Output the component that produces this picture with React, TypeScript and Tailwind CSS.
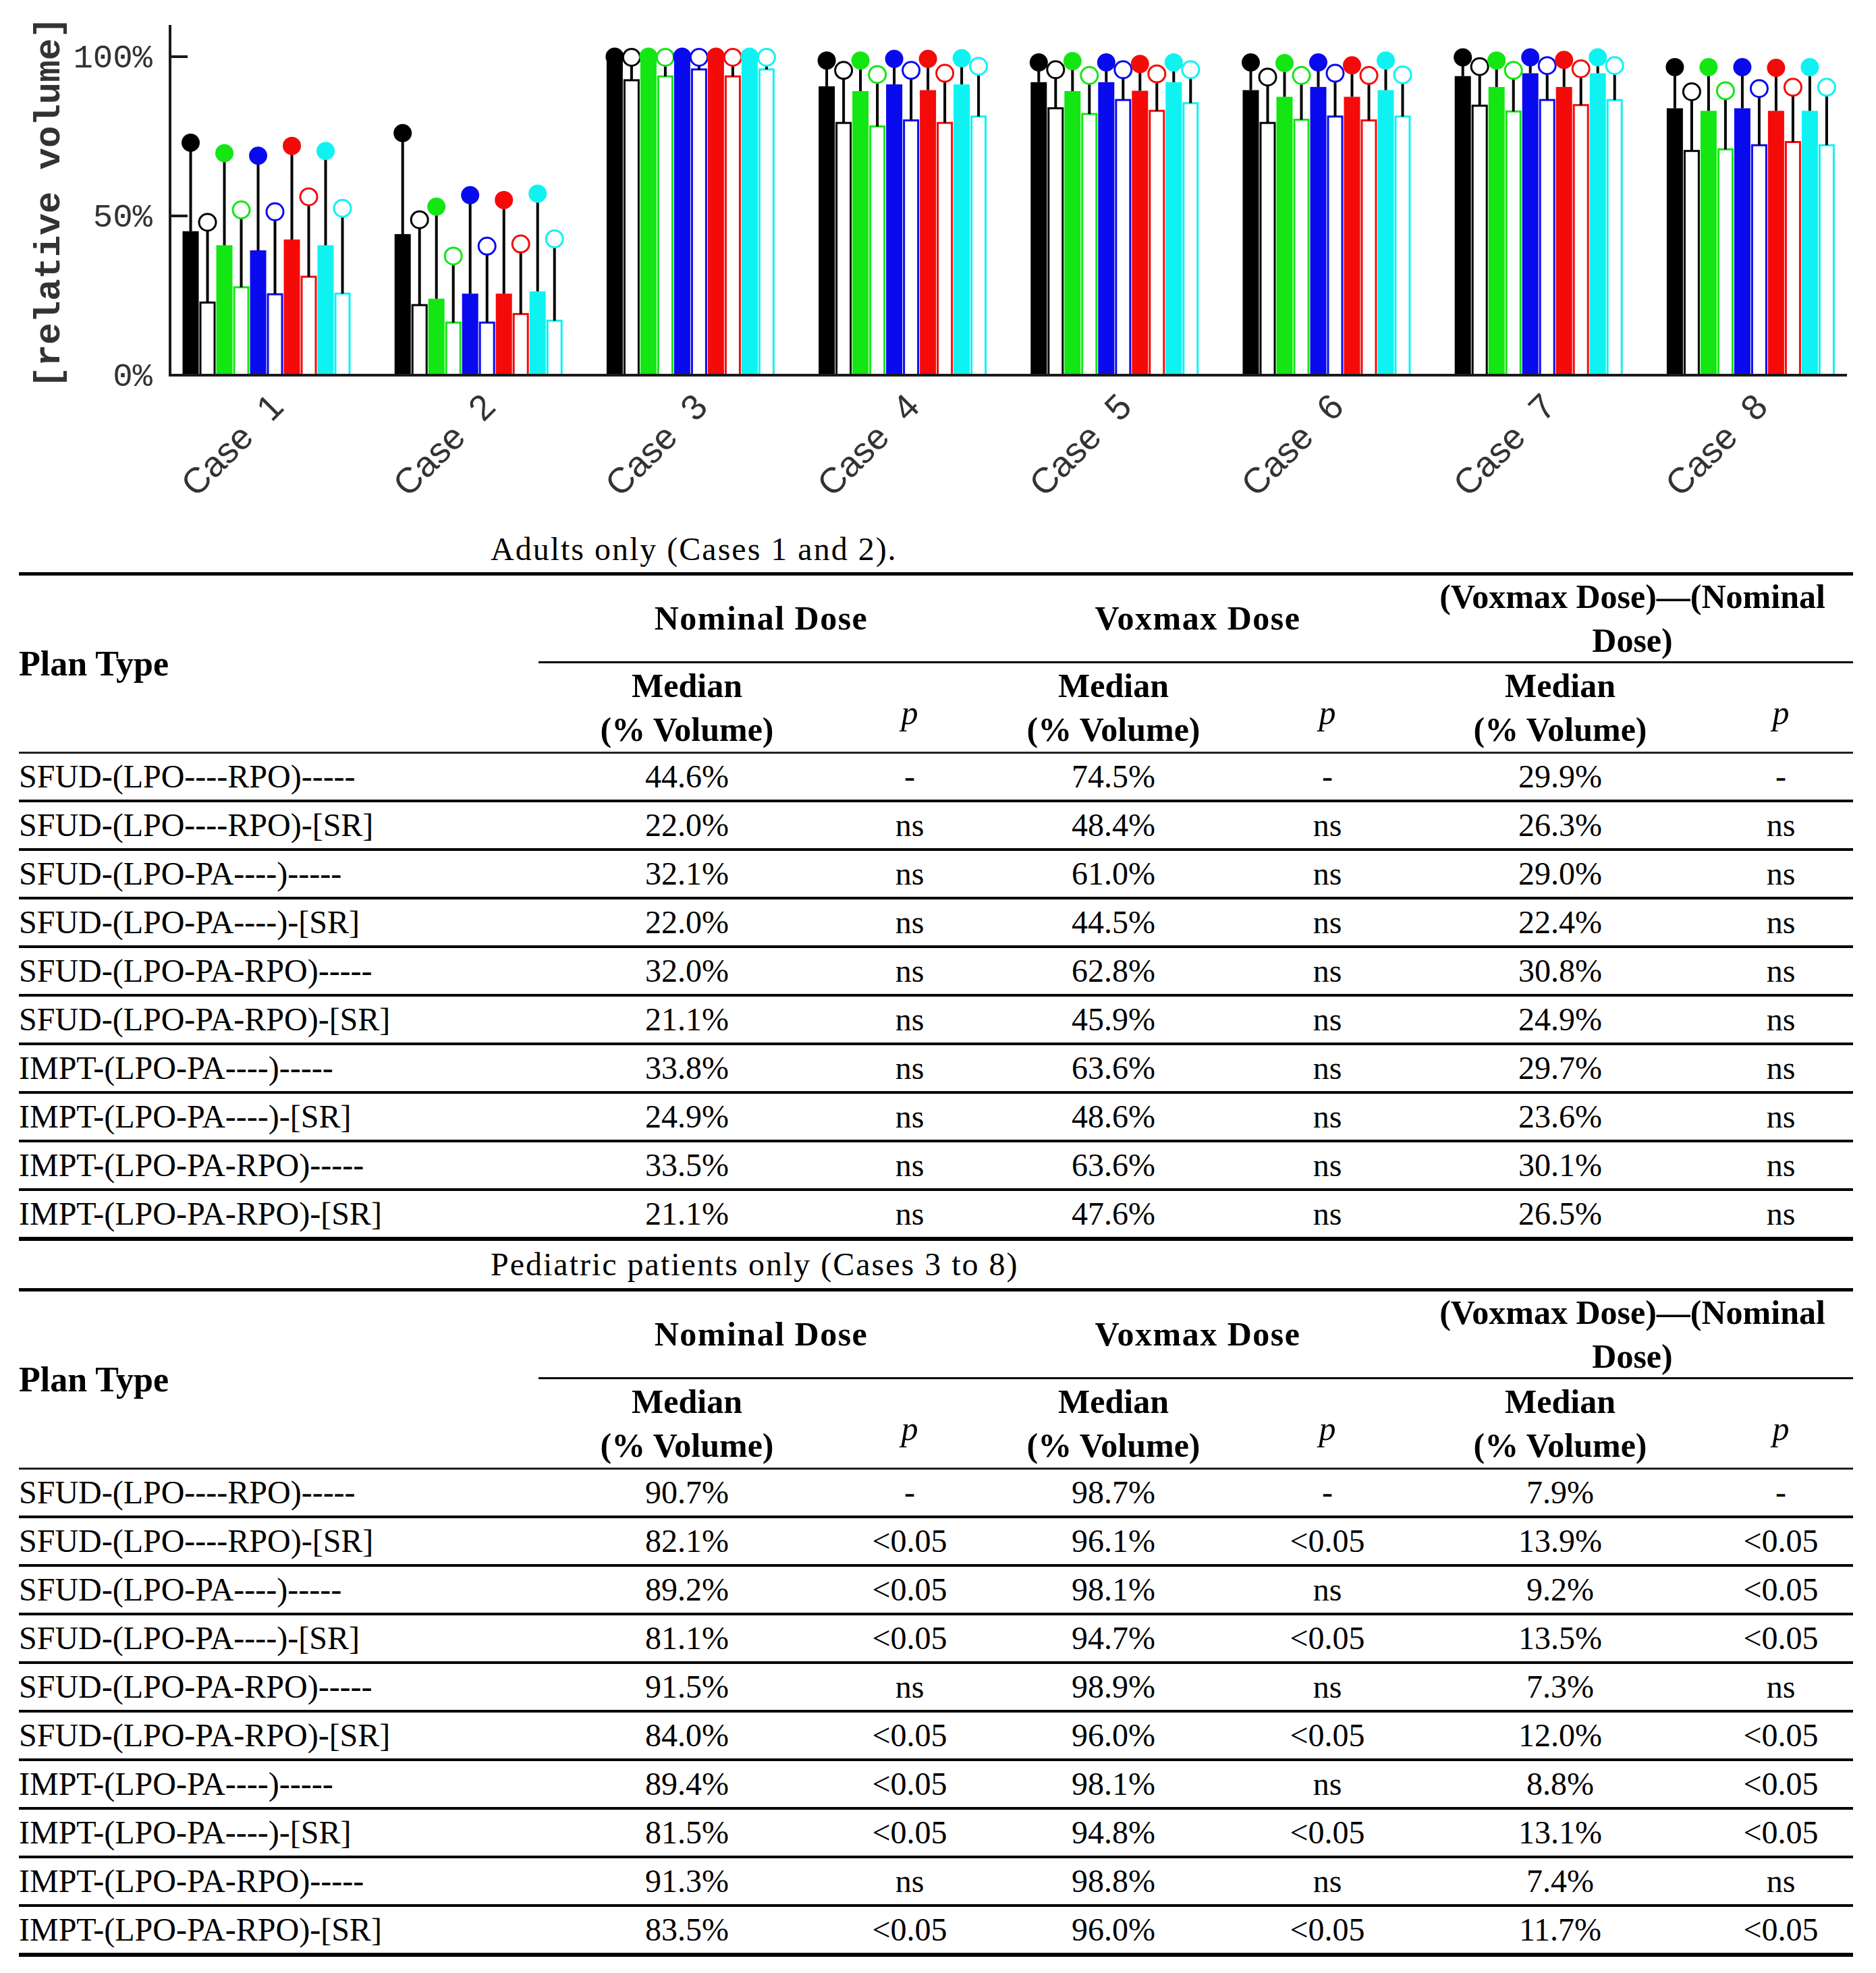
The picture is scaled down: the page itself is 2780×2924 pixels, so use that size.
import React from "react";

const PLANS = [
	"SFUD-(LPO----RPO)-----",
	"SFUD-(LPO----RPO)-[SR]",
	"SFUD-(LPO-PA----)-----",
	"SFUD-(LPO-PA----)-[SR]",
	"SFUD-(LPO-PA-RPO)-----",
	"SFUD-(LPO-PA-RPO)-[SR]",
	"IMPT-(LPO-PA----)-----",
	"IMPT-(LPO-PA----)-[SR]",
	"IMPT-(LPO-PA-RPO)-----",
	"IMPT-(LPO-PA-RPO)-[SR]",
];

// nominal median, p, voxmax median, p, diff median, p
const ADULT_ROWS: string[][] = [
	["44.6%", "-", "74.5%", "-", "29.9%", "-"],
	["22.0%", "ns", "48.4%", "ns", "26.3%", "ns"],
	["32.1%", "ns", "61.0%", "ns", "29.0%", "ns"],
	["22.0%", "ns", "44.5%", "ns", "22.4%", "ns"],
	["32.0%", "ns", "62.8%", "ns", "30.8%", "ns"],
	["21.1%", "ns", "45.9%", "ns", "24.9%", "ns"],
	["33.8%", "ns", "63.6%", "ns", "29.7%", "ns"],
	["24.9%", "ns", "48.6%", "ns", "23.6%", "ns"],
	["33.5%", "ns", "63.6%", "ns", "30.1%", "ns"],
	["21.1%", "ns", "47.6%", "ns", "26.5%", "ns"],
];

const PEDIATRIC_ROWS: string[][] = [
	["90.7%", "-", "98.7%", "-", "7.9%", "-"],
	["82.1%", "<0.05", "96.1%", "<0.05", "13.9%", "<0.05"],
	["89.2%", "<0.05", "98.1%", "ns", "9.2%", "<0.05"],
	["81.1%", "<0.05", "94.7%", "<0.05", "13.5%", "<0.05"],
	["91.5%", "ns", "98.9%", "ns", "7.3%", "ns"],
	["84.0%", "<0.05", "96.0%", "<0.05", "12.0%", "<0.05"],
	["89.4%", "<0.05", "98.1%", "ns", "8.8%", "<0.05"],
	["81.5%", "<0.05", "94.8%", "<0.05", "13.1%", "<0.05"],
	["91.3%", "ns", "98.8%", "ns", "7.4%", "ns"],
	["83.5%", "<0.05", "96.0%", "<0.05", "11.7%", "<0.05"],
];

const BAR_COLORS = ["#000000", "#14e614", "#0a0aee", "#f50a0a", "#0ff2f2"];

// per case: [nominal bar, voxmax marker] for each of the 10 plans
const CASES: number[][][] = [
	[[45.2, 73], [22.8, 48], [40.8, 69.7], [27.6, 51.9], [39.2, 68.9], [25.4, 51.3], [42.6, 72], [30.9, 56], [40.8, 70.4], [25.6, 52.4]],
	[[44.3, 76], [22, 48.8], [24, 52.9], [16.5, 37.4], [25.6, 56.5], [16.5, 40.5], [25.6, 55], [19.2, 41.2], [26.3, 57], [17.1, 42.8]],
	[[99.6, 100], [92.6, 99.8], [99.8, 100], [93.8, 99.8], [99.6, 100], [96, 99.8], [99.8, 100], [93.8, 99.8], [99.8, 100], [96, 99.8]],
	[[90.7, 98.8], [79.2, 95.7], [89.2, 98.8], [78.1, 94.4], [91.3, 99.3], [80, 95.7], [89.5, 99.3], [79.2, 94.8], [91.3, 99.5], [81.2, 97]],
	[[92, 98.2], [83.8, 95.9], [89.2, 98.6], [82, 94.1], [92, 98.2], [86.4, 95.9], [89.3, 97.7], [83, 94.6], [92, 98.2], [85.4, 95.9]],
	[[89.5, 98.2], [79.2, 93.6], [87.4, 98], [80.2, 94.1], [90.5, 98.2], [81.2, 94.8], [87.4, 97.3], [80, 94.1], [89.5, 98.8], [81.2, 94.3]],
	[[93.9, 99.8], [84.6, 96.9], [90.5, 98.8], [82.8, 95.7], [94.8, 99.8], [86.4, 97.2], [90.5, 99], [84.8, 96.2], [94.8, 99.8], [86.4, 97.2]],
	[[83.8, 96.7], [70.4, 89], [83, 96.7], [70.9, 89.3], [83.8, 96.7], [72.2, 90], [83, 96.5], [73.2, 90.4], [83, 96.7], [72.2, 90.4]],
];

const AXIS_X = 252;
const Y0 = 556;
const PX_PER_PCT = 4.72;
const GROUP_X = 270;
const GROUP_STEP = 314.2;
const BAR_W = 25;

const yOf = (v: number) => Y0 - v * PX_PER_PCT;

const Chart = () => {
	return (
		<svg width={2780} height={780} viewBox="0 0 2780 780" className="block">
			{/* bars */}
			{CASES.map((bars, g) =>
				bars.map(([bar], i) => {
					const x = GROUP_X + g * GROUP_STEP + i * BAR_W;
					const color = BAR_COLORS[Math.floor(i / 2)];
					const top = yOf(bar);
					return i % 2 === 0 ? (
						<rect key={`b${g}-${i}`} x={x + 0.5} y={top} width={BAR_W - 1} height={Y0 - top} fill={color} />
					) : (
						<rect
							key={`b${g}-${i}`}
							x={x + 2}
							y={top}
							width={BAR_W - 4}
							height={Y0 - top}
							fill="#fff"
							stroke={color}
							strokeWidth={3}
						/>
					);
				}),
			)}
			{/* whiskers */}
			{CASES.map((bars, g) =>
				bars.map(([bar, mark], i) => {
					const cx = GROUP_X + g * GROUP_STEP + i * BAR_W + BAR_W / 2;
					return (
						<line key={`w${g}-${i}`} x1={cx} x2={cx} y1={yOf(bar)} y2={yOf(mark)} stroke="#000" strokeWidth={4} />
					);
				}),
			)}
			{/* markers */}
			{CASES.map((bars, g) =>
				bars.map(([, mark], i) => {
					const cx = GROUP_X + g * GROUP_STEP + i * BAR_W + BAR_W / 2;
					const color = BAR_COLORS[Math.floor(i / 2)];
					return i % 2 === 0 ? (
						<circle key={`m${g}-${i}`} cx={cx} cy={yOf(mark)} r={13.5} fill={color} />
					) : (
						<circle key={`m${g}-${i}`} cx={cx} cy={yOf(mark)} r={12.5} fill="#fff" stroke={color} strokeWidth={3} />
					);
				}),
			)}
			{/* axes */}
			<line x1={AXIS_X} x2={AXIS_X} y1={37} y2={Y0 + 2} stroke="#1a1a1a" strokeWidth={4} />
			<line x1={AXIS_X} x2={2737} y1={Y0} y2={Y0} stroke="#1a1a1a" strokeWidth={4} />
			<line x1={AXIS_X} x2={AXIS_X + 26} y1={yOf(100)} y2={yOf(100)} stroke="#1a1a1a" strokeWidth={4} />
			<line x1={AXIS_X} x2={AXIS_X + 26} y1={yOf(50)} y2={yOf(50)} stroke="#1a1a1a" strokeWidth={4} />
			{/* tick labels */}
			{[100, 50, 0].map((v) => (
				<text
					key={v}
					x={226}
					y={yOf(v) + 16}
					textAnchor="end"
					fontFamily="'Liberation Mono', monospace"
					fontSize={49}
					fill="#333"
				>
					{v}%
				</text>
			))}
			<text
				transform="translate(88 300) rotate(-90)"
				textAnchor="middle"
				fontFamily="'Liberation Mono', monospace"
				fontWeight="bold"
				fontSize={54}
				fill="#333"
			>
				[relative volume]
			</text>
			{/* case labels */}
			{CASES.map((_, g) => {
				const cx = GROUP_X + g * GROUP_STEP + 125;
				return (
					<text
						key={`c${g}`}
						transform={`translate(${cx + 28} 606) rotate(-45)`}
						textAnchor="end"
						fontFamily="'Liberation Sans', Arial, sans-serif"
						fontSize={53}
						fill="#333"
					>
						Case<tspan dx={34}>{g + 1}</tspan>
					</text>
				);
			})}
		</svg>
	);
};

const COLS = "grid grid-cols-[770px_440px_220px_384px_250px_440px_214px]";

const ResultTable = ({rows}: {rows: string[][]}) => {
	return (
		<div className="ml-[28px] w-[2718px] border-t-[5px] border-black">
			<div className={`${COLS} grid-rows-[130px_134px] font-bold text-[50px] leading-[65px]`}>
				<div className="row-span-2 flex items-center border-b-[3px] border-[#222] text-[52px]">Plan Type</div>
				<div className="col-span-2 flex items-center justify-center border-b-[3px] border-black tracking-[1.5px]">
					Nominal Dose
				</div>
				<div className="col-span-2 flex items-center justify-center border-b-[3px] border-black tracking-[1.5px]">
					Voxmax Dose
				</div>
				<div className="col-span-2 flex items-center justify-center text-center border-b-[3px] border-black">
					(Voxmax Dose)—(Nominal
					<br />
					Dose)
				</div>
				{[0, 1, 2].map((k) => (
					<React.Fragment key={k}>
						<div className="flex items-center justify-center text-center border-b-[3px] border-[#222]">
							Median
							<br />
							(% Volume)
						</div>
						<div className="flex items-center justify-center pt-[16px] border-b-[3px] border-[#222] italic font-normal">
							p
						</div>
					</React.Fragment>
				))}
			</div>
			{rows.map((row, r) => (
				<div
					key={PLANS[r]}
					className={`${COLS} items-center text-[48px] leading-none border-black ${
						r === rows.length - 1 ? "h-[74px] border-b-[6px]" : "h-[72px] border-b-[4px]"
					}`}
				>
					<div>{PLANS[r]}</div>
					{row.map((cell, c) => (
						<div key={c} className="text-center">
							{cell}
						</div>
					))}
				</div>
			))}
		</div>
	);
};

const App = () => {
	return (
		<div className="w-[2780px] h-[2924px] overflow-hidden bg-white text-black font-['Liberation_Serif',serif]">
			<Chart />
			<div className="h-[68px] pl-[727px] flex items-center text-[48px] leading-none tracking-[2px]">
				Adults only (Cases 1 and 2).
			</div>
			<ResultTable rows={ADULT_ROWS} />
			<div className="h-[70px] pl-[727px] flex items-center text-[48px] leading-none tracking-[2px]">
				Pediatric patients only (Cases 3 to 8)
			</div>
			<ResultTable rows={PEDIATRIC_ROWS} />
		</div>
	);
};

export default App;
